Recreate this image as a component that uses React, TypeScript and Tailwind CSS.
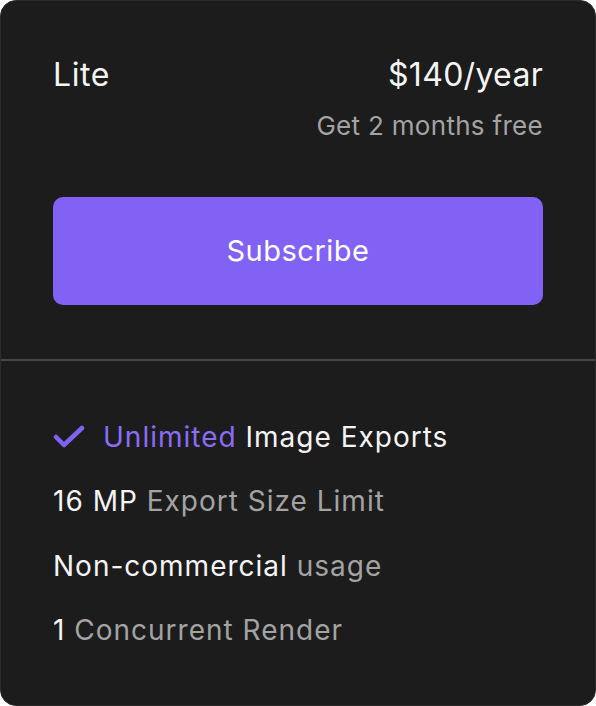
export default function App() {
  return (
    <div className="w-[596px] h-[706px] bg-white" style={{ fontFamily: 'Inter, "Noto Sans", sans-serif' }}>
      <section className="flex h-full flex-col rounded-[16px] border border-[#2c2c2c] bg-[#1c1c1c]">
        <div className="px-[52px] pt-[54px] pb-[54px]">
          <div className="flex items-baseline justify-between">
            <h2 className="text-[32px] font-normal leading-[40px] tracking-[0.6px] text-[#f4f4f4]">Lite</h2>
            <span className="text-[32px] font-normal leading-[40px] tracking-[0.3px] text-[#f4f4f4]">$140/year</span>
          </div>
          <p className="mt-[15px] text-right text-[26px] leading-[32px] tracking-[0.3px] text-[#a3a3a3]">Get 2 months free</p>
          <button className="mt-[55px] flex h-[108px] w-full items-center justify-center rounded-[10px] bg-[#8162f5] text-[29px] font-normal tracking-[0.5px] text-white">
            Subscribe
          </button>
        </div>
        <div className="h-[2px] bg-[#474747]" />
        <ul className="flex flex-col gap-[24.3px] px-[52px] pt-[56px] text-[28px] leading-[40px] tracking-[1px]">
          <li className="flex items-center gap-[18px]">
            <svg width="32" height="24" viewBox="0 0 32 24" fill="none" stroke="#8162f5" strokeWidth="4.5" strokeLinecap="round" strokeLinejoin="round">
              <path d="M3 12l8 8L29 3" />
            </svg>
            <span>
              <span className="text-[#8a6cf6]">Unlimited</span> <span className="text-[#f4f4f4]">Image Exports</span>
            </span>
          </li>
          <li>
            <span className="text-[#f4f4f4]">16 MP</span> <span className="text-[#a3a3a3]">Export Size Limit</span>
          </li>
          <li>
            <span className="text-[#f4f4f4]">Non-commercial</span> <span className="text-[#a3a3a3]">usage</span>
          </li>
          <li>
            <span className="text-[#f4f4f4]">1</span> <span className="text-[#a3a3a3]">Concurrent Render</span>
          </li>
        </ul>
      </section>
    </div>
  )
}
